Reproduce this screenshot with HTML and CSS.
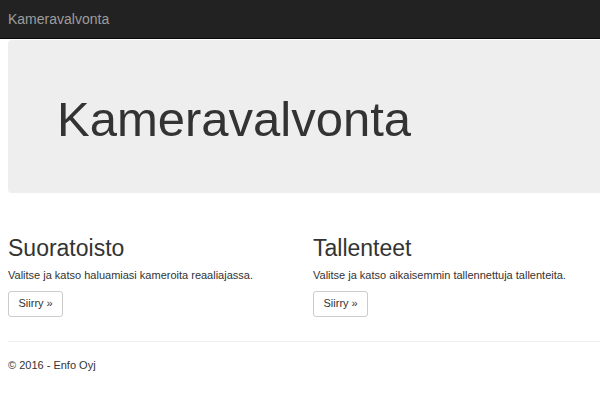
FILE: index.html
```html
<!DOCTYPE html>
<html lang="fi">
<head>
    <meta charset="UTF-8">
    <meta name="viewport" content="width=device-width, initial-scale=1.0">
    <title>Kameravalvonta</title>
    <link rel="stylesheet" href="styles.css">
</head>
<body>
    <nav class="navbar">
        <a class="navbar-brand" href="#">Kameravalvonta</a>
    </nav>

    <div class="container">
        <div class="jumbotron">
            <h1>Kameravalvonta</h1>
        </div>

        <div class="row">
            <div class="col">
                <h2>Suoratoisto</h2>
                <p>Valitse ja katso haluamiasi kameroita reaaliajassa.</p>
                <a class="btn" href="#">Siirry &raquo;</a>
            </div>
            <div class="col">
                <h2>Tallenteet</h2>
                <p>Valitse ja katso aikaisemmin tallennettuja tallenteita.</p>
                <a class="btn" href="#">Siirry &raquo;</a>
            </div>
        </div>

        <hr>
        <footer>
            <p>&copy; 2016 - Enfo Oyj</p>
        </footer>
    </div>
</body>
</html>
```

FILE: styles.css
```css
body {
    margin: 0;
    font-family: "Liberation Sans", Arial, sans-serif;
    font-size: 11px;
    line-height: 1.43;
    color: #333;
    background: #fff;
    overflow: hidden;
}
.navbar {
    height: 38px;
    background-color: #222;
    border-bottom: 1px solid #080808;
}
.navbar-brand {
    display: block;
    padding-left: 8px;
    font-size: 14px;
    line-height: 38px;
    color: #9d9d9d;
    text-decoration: none;
}
.container {
    width: 620px;
    margin: 0 0 0 8px;
}
.jumbotron {
    margin-top: 1px;
    padding: 53px 49px 46px;
    background-color: #eee;
    border-radius: 4px;
}
.jumbotron h1 {
    margin: 0;
    font-size: 49px;
    font-weight: normal;
    line-height: 1.1;
}
.row {
    display: grid;
    grid-template-columns: 305px 305px;
}
.col h2 {
    margin: 43px 0 7px;
    font-size: 23px;
    font-weight: normal;
    line-height: 1.1;
}
.col p {
    margin: 0 0 7px;
}
.btn {
    display: inline-block;
    padding: 4.1px 9.5px;
    border: 1px solid #ccc;
    border-radius: 3px;
    background: #fff;
    color: #333;
    text-decoration: none;
}
hr {
    margin: 24px 0 16px;
    border: 0;
    border-top: 1px solid #eee;
}
footer p {
    margin: 0;
}
```
